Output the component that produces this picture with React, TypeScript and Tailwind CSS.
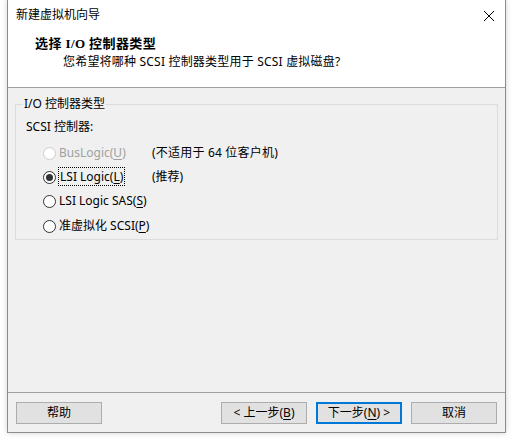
import React from "react";

const font = { fontFamily: '"Noto Sans", "Noto Sans CJK SC", sans-serif' };

function U({ children }: { children: React.ReactNode }) {
  return <span className="underline underline-offset-[2px]">{children}</span>;
}

function Radio({ checked, disabled }: { checked?: boolean; disabled?: boolean }) {
  return (
    <span
      className={`flex h-[13px] w-[13px] shrink-0 items-center justify-center rounded-full border bg-white ${
        disabled ? "border-[#cccccc]" : "border-[#333333]"
      }`}
    >
      {checked && <span className="h-[7px] w-[7px] rounded-full bg-[#333333]" />}
    </span>
  );
}

function Btn({ children, primary }: { children: React.ReactNode; primary?: boolean }) {
  return (
    <div
      className={`flex h-[22px] w-[86px] items-center justify-center bg-[#e1e1e1] text-[12px] text-black ${
        primary ? "border-2 border-[#0078d7]" : "border border-[#adadad]"
      }`}
    >
      {children}
    </div>
  );
}

export default function App() {
  return (
    <div className="h-[440px] w-[513px] bg-white" style={font}>
      <div className="ml-[7px] flex h-[433px] w-[499px] flex-col border-x border-b border-[#8c8c8c] bg-[#f0f0f0] shadow-[0_0_6px_rgba(0,0,0,0.18)]">
        {/* header */}
        <div className="h-[88px] shrink-0 border-b border-[#a0a0a0] bg-white">
          <div className="flex h-[30px] items-center justify-between pl-[8px] pr-[10px] text-[12px] text-black">
            <span>新建虚拟机向导</span>
            <svg width="12" height="12" viewBox="0 0 12 12" className="mt-[1px]">
              <path d="M1 1 L11 11 M11 1 L1 11" stroke="#000" strokeWidth="1" />
            </svg>
          </div>
          <div
            className="mt-[5px] pl-[27px] text-[13px] font-bold leading-[18px] tracking-[0.4px] text-black"
            style={{ fontFamily: '"Liberation Serif", "Noto Sans CJK SC", serif' }}
          >
            选择 I/O 控制器类型
          </div>
          <div className="pl-[55px] text-[12px] leading-[18px] tracking-[0.2px] text-black">
            您希望将哪种 SCSI 控制器类型用于 SCSI 虚拟磁盘?
          </div>
        </div>

        {/* group box */}
        <div className="relative mx-[7px] mt-[16px] h-[136px] border border-[#dcdcdc] text-[12px] text-black">
          <span className="absolute left-[7px] top-[-9px] bg-[#f0f0f0] px-[1px] leading-[16px]">
            I/O 控制器类型
          </span>
          <div className="pl-[10px] pt-[14px] leading-[16px]">SCSI 控制器:</div>
          <div className="mt-[10px] flex flex-col gap-[8px] pl-[27px]">
            <div className="flex h-[16px] items-center">
              <Radio disabled />
              <span className="ml-[3px] w-[93px] text-[#a0a0a0]">
                BusLogic(<U>U</U>)
              </span>
              <span className="tracking-[0.2px]">(不适用于 64 位客户机)</span>
            </div>
            <div className="flex h-[16px] items-center">
              <Radio checked />
              <span className="ml-[2px] w-[94px]">
                <span className="border border-dotted border-black px-[1px]">
                  LSI Logic(<U>L</U>)
                </span>
              </span>
              <span>(推荐)</span>
            </div>
            <div className="flex h-[16px] items-center">
              <Radio />
              <span className="ml-[3px]">
                LSI Logic SAS(<U>S</U>)
              </span>
            </div>
            <div className="mt-[1px] flex h-[16px] items-center">
              <Radio />
              <span className="ml-[3px]">
                准虚拟化 SCSI(<U>P</U>)
              </span>
            </div>
          </div>
        </div>

        {/* footer */}
        <div className="mt-auto flex h-[40px] items-start border-t border-[#a0a0a0] px-[8px] pt-[9px]">
          <Btn>帮助</Btn>
          <div className="ml-auto flex gap-[9px]">
            <Btn>
              &lt; 上一步(<U>B</U>)
            </Btn>
            <Btn primary>
              下一步(<U>N</U>) &gt;
            </Btn>
            <Btn>取消</Btn>
          </div>
        </div>
      </div>
    </div>
  );
}
